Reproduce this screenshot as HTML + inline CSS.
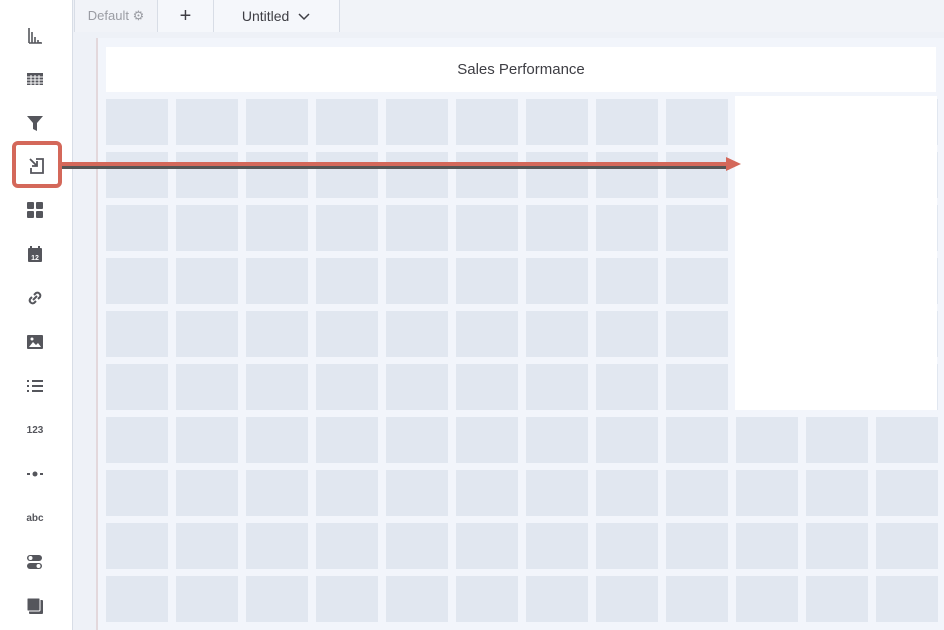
<!DOCTYPE html>
<html><head><meta charset="utf-8"><style>
*{margin:0;padding:0;box-sizing:border-box}
body{width:944px;height:630px;overflow:hidden;background:#eef1f7;font-family:"Liberation Sans",sans-serif;position:relative}
.side{position:absolute;left:0;top:0;width:73px;height:630px;background:#fff;border-right:1px solid #d8dde6}
.ic{position:absolute;left:24px;width:22px;height:22px;display:flex;align-items:center;justify-content:center;color:#55565c;font-size:11px;font-weight:bold}
.tabs{position:absolute;left:74px;top:0;right:0;height:32px;background:#f1f3f8}
.tab{position:absolute;top:0;height:32px;border-right:1px solid #d8dde6;display:flex;align-items:center;justify-content:center;color:#3e3e44;font-size:14px}
.canvas{position:absolute;left:96px;top:38px;right:0;bottom:0;background:#f2f5fb;border-left:2px solid #e3d8dc}
.title{position:absolute;left:106px;top:47px;width:830px;height:45px;background:#fff;display:flex;align-items:center;justify-content:center;font-size:15px;color:#3e3e44}
.c{position:absolute;width:62px;height:46px;background:#e1e7f0}
.white{position:absolute;left:735px;top:96px;width:202px;height:314px;background:#fff}
</style></head><body>
<div class="side">
<div class="ic" style="top:24px"><svg width="18" height="18"><path d="M3 2v15M6 6v11M9 11v6M12 14v3M14 16v1M3 17h13" stroke="#55565c" stroke-width="1.6" fill="none"/></svg></div>
<div class="ic" style="top:68px"><svg width="18" height="16"><rect x="1" y="2" width="16" height="12" fill="#55565c"/><path d="M1 6h16M1 9h16M1 12h16M5 4v10M9 4v10M13 4v10" stroke="#fff" stroke-width="1"/></svg></div>
<div class="ic" style="top:112px"><svg width="18" height="18"><path d="M1 2h16l-6 7v8l-4-2v-6z" fill="#55565c"/></svg></div>
<div style="position:absolute;left:12px;top:141px;width:50px;height:47px;border:4px solid #d4685a;border-radius:6px;background:#fff"></div>
<div class="ic" style="top:155px;left:26px"><svg width="20" height="20"><path d="M3 3l7 7M10 5v5H5M9 3h7v14H4v-5" stroke="#55565c" stroke-width="1.8" fill="none"/></svg></div>
<div class="ic" style="top:199px"><svg width="18" height="18"><rect x="1" y="1" width="7" height="7" rx="1" fill="#55565c"/><rect x="10" y="1" width="7" height="7" rx="1" fill="#55565c"/><rect x="1" y="10" width="7" height="7" rx="1" fill="#55565c"/><rect x="10" y="10" width="7" height="7" rx="1" fill="#55565c"/></svg></div>
<div class="ic" style="top:243px"><svg width="18" height="18"><rect x="2" y="3" width="14" height="14" rx="1" fill="#55565c"/><path d="M5 1v4M13 1v4" stroke="#55565c" stroke-width="2"/><text x="9" y="15" font-size="7" fill="#fff" text-anchor="middle" font-family="Liberation Sans" font-weight="bold">12</text></svg></div>
<div class="ic" style="top:287px"><svg width="18" height="18"><path d="M8 6l2-2a3 3 0 0 1 4 4l-2 2M10 12l-2 2a3 3 0 0 1-4-4l2-2M7 11l4-4" stroke="#55565c" stroke-width="2" fill="none"/></svg></div>
<div class="ic" style="top:331px"><svg width="18" height="16"><rect x="1" y="1" width="16" height="14" rx="1" fill="#55565c"/><path d="M3 13l4-5 3 3 2-2 3 4z" fill="#fff"/><circle cx="6" cy="5" r="1.5" fill="#fff"/></svg></div>
<div class="ic" style="top:375px"><svg width="18" height="16"><path d="M1 3h2M6 3h11M1 8h2M6 8h11M1 13h2M6 13h11" stroke="#55565c" stroke-width="2"/></svg></div>
<div class="ic" style="top:419px;font-size:10px">123</div>
<div class="ic" style="top:463px"><svg width="18" height="8"><path d="M1 4h3M14 4h3" stroke="#55565c" stroke-width="2"/><circle cx="9" cy="4" r="2.5" fill="#55565c"/></svg></div>
<div class="ic" style="top:507px;font-size:10px">abc</div>
<div class="ic" style="top:551px"><svg width="18" height="18"><rect x="1" y="2" width="15" height="6" rx="3" fill="#55565c"/><circle cx="4.5" cy="5" r="2" fill="#fff"/><rect x="1" y="10" width="15" height="6" rx="3" fill="#55565c"/><circle cx="12.5" cy="13" r="2" fill="#fff"/></svg></div>
<div class="ic" style="top:595px"><svg width="18" height="18"><rect x="3" y="3" width="14" height="14" rx="1" fill="#55565c"/><rect x="1" y="1" width="13" height="13" rx="1" fill="#55565c" stroke="#fff" stroke-width="1"/></svg></div>
</div>
<div class="tabs">
<div class="tab" style="left:0;width:84px;color:#9a9ca3;font-size:13px;border-left:1px solid #d8dde6">Default ⚙</div>
<div class="tab" style="left:84px;width:56px;font-size:20px;background:#f5f7fb">+</div>
<div class="tab" style="left:140px;width:126px;background:#f5f7fb">Untitled &nbsp;<svg width="14" height="10"><path d="M2 3l5 5 5-5" stroke="#3e3e44" stroke-width="1.5" fill="none"/></svg></div>
</div>
<div class="canvas"></div>
<div class="title">Sales Performance</div>
<div id="g"></div>
<div class="white"></div>
<svg style="position:absolute;left:0;top:0" width="944" height="630"><path d="M62 165H728" stroke="#555" stroke-width="4" transform="translate(0,2)"/><path d="M62 164H728" stroke="#d4685a" stroke-width="4"/><path d="M726 157L741 164L726 171z" fill="#d4685a"/></svg>
<script>
var g=document.getElementById('g'),h='';
for(var r=0;r<10;r++)for(var c=0;c<12;c++){var x=106+c*70,y=99+r*53;h+='<div class="c" style="left:'+x+'px;top:'+y+'px"></div>';}
g.innerHTML=h;
</script>
</body></html>
